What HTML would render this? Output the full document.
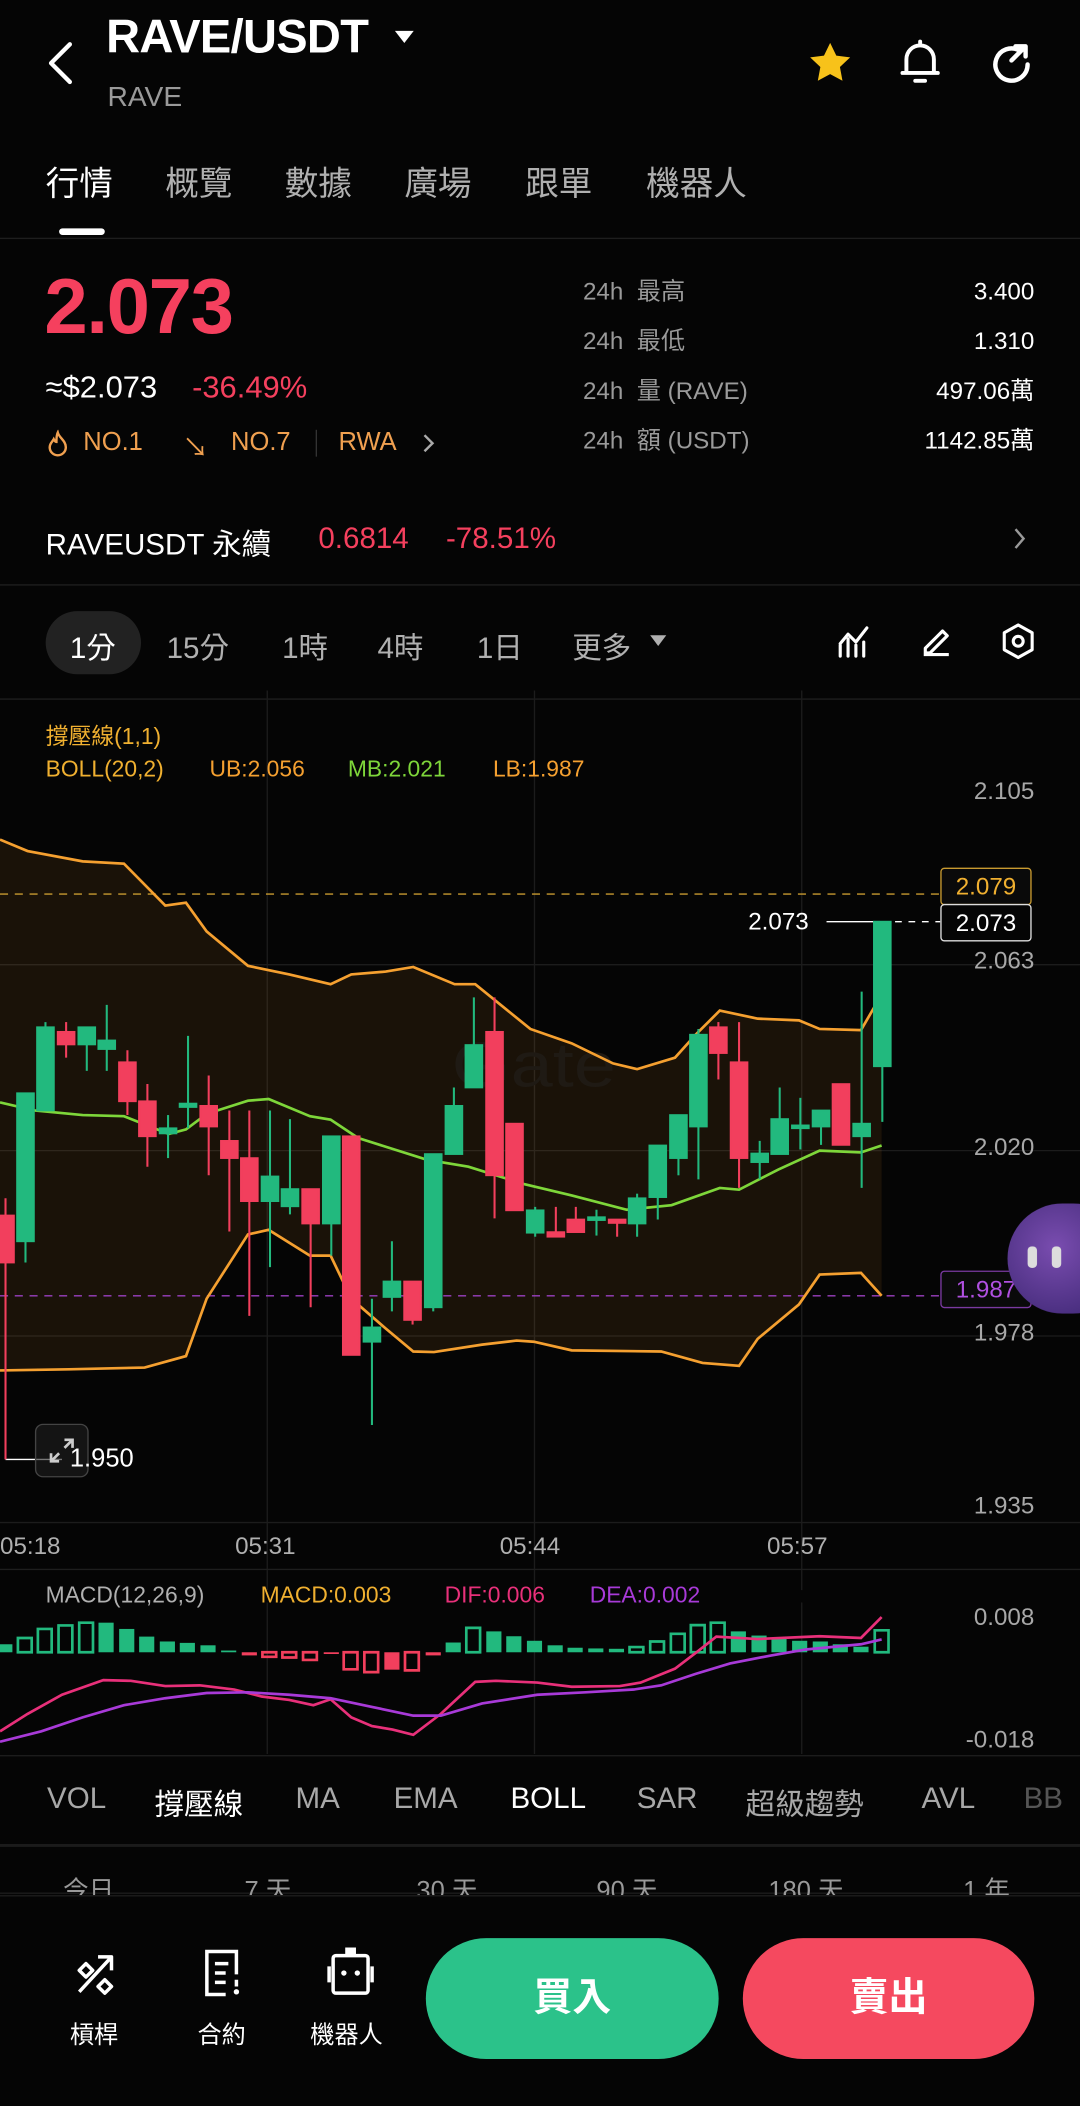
<!DOCTYPE html>
<html><head><meta charset="utf-8">
<style>
*{margin:0;padding:0;box-sizing:border-box}
html,body{width:1080px;height:2106px;background:#050505;overflow:hidden}
body{font-family:"Liberation Sans","Noto Sans CJK TC",sans-serif;color:#fff}
#w{position:absolute;left:0;top:0;width:804px;height:1568px;transform:scale(1.34328,1.34311);transform-origin:0 0;background:#050505}
.a{position:absolute;white-space:nowrap}
.g{color:#9a9a9a}
.r{color:#f5405e}
.line{position:absolute;left:0;width:804px;height:1px;background:#1e1e1e}
.ax{position:absolute;right:34px;font-size:18px;color:#a8a8a8;text-align:right}
</style></head><body><div id="w">

<svg class="a" style="left:33px;top:30px" width="24" height="34" viewBox="0 0 24 34"><path d="M19 3 L5 17 L19 31" fill="none" stroke="#fff" stroke-width="3.2" stroke-linecap="round" stroke-linejoin="round"/></svg>
<div class="a" style="left:79px;top:8px;font-size:35px;font-weight:bold;letter-spacing:-0.5px">RAVE/USDT</div>
<svg class="a" style="left:293px;top:22px" width="16" height="12"><path d="M1 1 H15 L8 10 Z" fill="#fff"/></svg>
<div class="a g" style="left:80px;top:61px;font-size:21px">RAVE</div>
<svg class="a" style="left:599px;top:28px" width="38" height="38" viewBox="0 0 24 24"><path d="M12 2.5l2.9 6 6.5.8-4.8 4.5 1.2 6.5L12 17.2 6.2 20.3l1.2-6.5L2.6 9.3l6.5-.8z" fill="#f7c21a"/></svg>
<svg class="a" style="left:667px;top:28px" width="36" height="38" viewBox="0 0 24 26"><path d="M5 18V11a7 7 0 0 1 14 0v7H5z M3 18h18 M9.5 22h5 M12 2v2" fill="none" stroke="#fff" stroke-width="2" stroke-linecap="round" stroke-linejoin="round"/></svg>
<svg class="a" style="left:735px;top:30px" width="36" height="36" viewBox="0 0 24 24"><path d="M20 12a8 8 0 1 1-4-6.9 M14 3h5v5 M19 3l-7 7" fill="none" stroke="#fff" stroke-width="2.2" stroke-linecap="round" stroke-linejoin="round"/></svg>

<div class="a" style="left:34px;top:117px;font-size:25px">行情</div>
<div class="a g" style="left:123px;top:117px;font-size:25px;color:#b0b0b0">概覽</div>
<div class="a g" style="left:212px;top:117px;font-size:25px;color:#b0b0b0">數據</div>
<div class="a g" style="left:301px;top:117px;font-size:25px;color:#b0b0b0">廣場</div>
<div class="a g" style="left:391px;top:117px;font-size:25px;color:#b0b0b0">跟單</div>
<div class="a g" style="left:481px;top:117px;font-size:25px;color:#b0b0b0">機器人</div>
<div class="a" style="left:44px;top:170px;width:34px;height:5px;border-radius:3px;background:#fff"></div>
<div class="line" style="top:177px"></div>

<div class="a r" style="left:33px;top:195px;font-size:58px;font-weight:bold;letter-spacing:-1px">2.073</div>
<div class="a" style="left:34px;top:275px;font-size:23px">≈$2.073</div>
<div class="a r" style="left:143px;top:275px;font-size:23px">-36.49%</div>
<svg class="a" style="left:34px;top:320px" width="18" height="20" viewBox="0 0 18 20"><path d="M9 2c1 4 6 6 6 11a6 6 0 0 1-12 0c0-3 2-4 3-6 1 2 2 2 2 2 0-3 0-5 1-7z" fill="none" stroke="#f0a050" stroke-width="1.8"/></svg>
<div class="a" style="left:62px;top:319px;font-size:19px;color:#f0a050">NO.1</div>
<div class="a" style="left:136px;top:319px;font-size:19px;color:#f0a050">↘</div>
<div class="a" style="left:172px;top:319px;font-size:19px;color:#f0a050">NO.7</div>
<div class="a" style="left:235px;top:320px;width:1px;height:20px;background:#333"></div>
<div class="a" style="left:252px;top:319px;font-size:19px;color:#f0a050">RWA</div>
<svg class="a" style="left:313px;top:322px" width="12" height="16"><path d="M3 2l6 6-6 6" fill="none" stroke="#aaa" stroke-width="1.8"/></svg>

<div class="a g" style="left:434px;top:206px;font-size:18px;line-height:22px">24h&nbsp;&nbsp;最高<br><span style="display:block;height:15px"></span>24h&nbsp;&nbsp;最低<br><span style="display:block;height:15px"></span>24h&nbsp;&nbsp;量 (RAVE)<br><span style="display:block;height:15px"></span>24h&nbsp;&nbsp;額 (USDT)</div>
<div class="a" style="right:34px;top:206px;font-size:18px;line-height:22px;text-align:right">3.400<br><span style="display:block;height:15px"></span>1.310<br><span style="display:block;height:15px"></span>497.06萬<br><span style="display:block;height:15px"></span>1142.85萬</div>

<div class="a" style="left:34px;top:388px;font-size:22px">RAVEUSDT 永續</div>
<div class="a r" style="left:237px;top:388px;font-size:22px">0.6814</div>
<div class="a r" style="left:332px;top:388px;font-size:22px">-78.51%</div>
<svg class="a" style="left:753px;top:392px" width="12" height="18"><path d="M3 2l6 7-6 7" fill="none" stroke="#999" stroke-width="1.8"/></svg>
<div class="line" style="top:435px"></div>

<div class="a" style="left:34px;top:455px;width:71px;height:47px;border-radius:24px;background:#222"></div>
<div class="a" style="left:52px;top:465px;font-size:22px">1分</div>
<div class="a" style="left:124px;top:465px;font-size:22px;color:#b0b0b0">15分</div>
<div class="a" style="left:210px;top:465px;font-size:22px;color:#b0b0b0">1時</div>
<div class="a" style="left:281px;top:465px;font-size:22px;color:#b0b0b0">4時</div>
<div class="a" style="left:355px;top:465px;font-size:22px;color:#b0b0b0">1日</div>
<div class="a" style="left:426px;top:465px;font-size:22px;color:#b0b0b0">更多</div>
<svg class="a" style="left:483px;top:472px" width="14" height="10"><path d="M1 1H13L7 9Z" fill="#b0b0b0"/></svg>
<svg class="a" style="left:622px;top:464px" width="28" height="28" viewBox="0 0 24 24"><path d="M3 21V14 M8 21V10 M13 21V14 M18 21V12 M3 13l5-6 5 5 7-9" fill="none" stroke="#fff" stroke-width="2" stroke-linecap="round" stroke-linejoin="round"/></svg>
<svg class="a" style="left:683px;top:464px" width="28" height="28" viewBox="0 0 24 24"><path d="M4 20h16 M5 16l11-11 3 3-11 11H5z" fill="none" stroke="#fff" stroke-width="2" stroke-linejoin="round"/></svg>
<svg class="a" style="left:744px;top:463px" width="28" height="30" viewBox="0 0 24 26"><path d="M12 2l9 5v11l-9 5-9-5V7z" fill="none" stroke="#fff" stroke-width="2" stroke-linejoin="round"/><circle cx="12" cy="12.5" r="3.2" fill="none" stroke="#fff" stroke-width="2"/></svg>
<div class="line" style="top:520px"></div>

<svg class="a" style="left:0;top:513.8px" width="804" height="670" viewBox="0 0 1568 1568" preserveAspectRatio="none">
<g stroke="#1c1c1c" stroke-width="1">
<line x1="388" y1="0" x2="388" y2="1568" vector-effect="non-scaling-stroke"/>
<line x1="776" y1="0" x2="776" y2="1568" vector-effect="non-scaling-stroke"/>
<line x1="1164" y1="0" x2="1164" y2="1568" vector-effect="non-scaling-stroke"/>
<line x1="0" y1="478" x2="1568" y2="478" vector-effect="non-scaling-stroke"/>
<line x1="0" y1="802" x2="1568" y2="802" vector-effect="non-scaling-stroke"/>
<line x1="0" y1="1125" x2="1568" y2="1125" vector-effect="non-scaling-stroke"/>
<line x1="0" y1="1450" x2="1568" y2="1450" vector-effect="non-scaling-stroke"/>
</g>
<path d="M0,260 L40,280 120,298 180,302 240,375 270,370 300,420 360,480 420,495 480,512 510,495 560,490 600,482 660,512 690,512 770,590 830,615 890,650 925,660 980,640 1010,600 1045,558 1100,572 1160,575 1190,590 1250,592 1280,530 L1280,1055 1250,1015 1190,1018 1160,1070 1100,1130 1073,1177 1020,1172 960,1152 830,1150 775,1135 750,1133 700,1140 630,1153 600,1152 560,1112 510,1060 480,985 450,985 390,940 360,948 300,1060 270,1160 210,1180 100,1183 0,1185Z" fill="#f5a030" fill-opacity="0.09"/>
<text x="775" y="690" font-family="Liberation Sans" font-size="110" fill="#1f1a14" text-anchor="middle">Gate</text>
<line x1="0" y1="355" x2="1365" y2="355" stroke="#c89a30" stroke-dasharray="6 5" vector-effect="non-scaling-stroke"/>
<line x1="0" y1="1055" x2="1365" y2="1055" stroke="#9a40c0" stroke-dasharray="6 5" vector-effect="non-scaling-stroke"/>
<line x1="1200" y1="403" x2="1280" y2="403" stroke="#fff" vector-effect="non-scaling-stroke"/>
<line x1="1280" y1="403" x2="1365" y2="403" stroke="#fff" stroke-dasharray="5 5" vector-effect="non-scaling-stroke"/>
<line x1="8" y1="1340" x2="90" y2="1340" stroke="#fff" vector-effect="non-scaling-stroke"/>
<g fill="none" stroke-width="2">
<path d="M0,260 L40,280 120,298 180,302 240,375 270,370 300,420 360,480 420,495 480,512 510,495 560,490 600,482 660,512 690,512 770,590 830,615 890,650 925,660 980,640 1010,600 1045,558 1100,572 1160,575 1190,590 1250,592 1280,530" stroke="#f5a030" vector-effect="non-scaling-stroke"/>
<path d="M0,718 L50,732 120,740 180,742 245,773 270,765 300,738 360,715 390,712 450,742 480,748 520,780 620,818 680,830 760,860 830,880 910,905 975,897 1045,867 1073,870 1130,835 1190,802 1250,805 1280,793" stroke="#7ed63a" vector-effect="non-scaling-stroke"/>
<path d="M0,1185 L100,1183 210,1180 270,1160 300,1060 360,948 390,940 450,985 480,985 510,1060 560,1112 600,1152 630,1153 700,1140 750,1133 775,1135 830,1150 960,1152 1020,1172 1073,1177 1100,1130 1160,1070 1190,1018 1250,1015 1280,1055" stroke="#f5a030" vector-effect="non-scaling-stroke"/>
</g>
<g fill="#f23f5d" stroke="#f23f5d" stroke-width="3">
<line x1="8" y1="885" x2="8" y2="1340"/><rect x="-4" y="915" width="24" height="82"/>
<line x1="96" y1="578" x2="96" y2="640"/><rect x="84" y="595" width="24" height="22"/>
<line x1="185" y1="627" x2="185" y2="740"/><rect x="173" y="648" width="24" height="68"/>
<line x1="214" y1="686" x2="214" y2="830"/><rect x="202" y="716" width="24" height="61"/>
<line x1="303" y1="671" x2="303" y2="845"/><rect x="291" y="724" width="24" height="36"/>
<line x1="333" y1="732" x2="333" y2="943"/><rect x="321" y="785" width="24" height="30"/>
<line x1="362" y1="732" x2="362" y2="1090"/><rect x="350" y="815" width="24" height="75"/>
<line x1="451" y1="869" x2="451" y2="1075"/><rect x="439" y="869" width="24" height="60"/>
<rect x="498" y="777" width="24" height="381"/>
<line x1="599" y1="1030" x2="599" y2="1105"/><rect x="587" y="1030" width="24" height="67"/>
<line x1="718" y1="535" x2="718" y2="920"/><rect x="706" y="595" width="24" height="250"/>
<rect x="735" y="755" width="24" height="151"/>
<line x1="807" y1="900" x2="807" y2="952"/><rect x="795" y="944" width="24" height="8"/>
<line x1="836" y1="900" x2="836" y2="944"/><rect x="824" y="922" width="24" height="22"/>
<line x1="896" y1="922" x2="896" y2="952"/><rect x="884" y="922" width="24" height="6"/>
<line x1="1043" y1="578" x2="1043" y2="678"/><rect x="1031" y="587" width="24" height="45"/>
<line x1="1073" y1="578" x2="1073" y2="867"/><rect x="1061" y="648" width="24" height="167"/>
<rect x="1209" y="686" width="24" height="106"/>
</g>
<g fill="#22b97e" stroke="#22b97e" stroke-width="3">
<line x1="37" y1="702" x2="37" y2="997"/><rect x="25" y="702" width="24" height="258"/>
<line x1="66" y1="578" x2="66" y2="732"/><rect x="54" y="587" width="24" height="145"/>
<line x1="126" y1="587" x2="126" y2="663"/><rect x="114" y="587" width="24" height="30"/>
<line x1="155" y1="548" x2="155" y2="663"/><rect x="143" y="610" width="24" height="15"/>
<line x1="244" y1="740" x2="244" y2="815"/><rect x="232" y="763" width="24" height="9"/>
<line x1="273" y1="602" x2="273" y2="763"/><rect x="261" y="720" width="24" height="6"/>
<line x1="392" y1="732" x2="392" y2="1005"/><rect x="380" y="847" width="24" height="43"/>
<line x1="421" y1="747" x2="421" y2="913"/><rect x="409" y="869" width="24" height="30"/>
<line x1="481" y1="777" x2="481" y2="985"/><rect x="469" y="777" width="24" height="152"/>
<line x1="540" y1="1060" x2="540" y2="1280"/><rect x="528" y="1110" width="24" height="25"/>
<line x1="569" y1="960" x2="569" y2="1082"/><rect x="557" y="1030" width="24" height="27"/>
<line x1="629" y1="808" x2="629" y2="1082"/><rect x="617" y="808" width="24" height="267"/>
<line x1="659" y1="692" x2="659" y2="808"/><rect x="647" y="724" width="24" height="84"/>
<line x1="688" y1="535" x2="688" y2="692"/><rect x="676" y="618" width="24" height="74"/>
<line x1="777" y1="900" x2="777" y2="952"/><rect x="765" y="906" width="24" height="39"/>
<line x1="866" y1="905" x2="866" y2="950"/><rect x="854" y="918" width="24" height="5"/>
<line x1="925" y1="877" x2="925" y2="952"/><rect x="913" y="885" width="24" height="44"/>
<line x1="955" y1="793" x2="955" y2="922"/><rect x="943" y="793" width="24" height="90"/>
<line x1="985" y1="740" x2="985" y2="845"/><rect x="973" y="740" width="24" height="75"/>
<line x1="1014" y1="590" x2="1014" y2="852"/><rect x="1002" y="600" width="24" height="160"/>
<line x1="1103" y1="785" x2="1103" y2="852"/><rect x="1091" y="807" width="24" height="15"/>
<line x1="1132" y1="692" x2="1132" y2="808"/><rect x="1120" y="747" width="24" height="61"/>
<line x1="1162" y1="710" x2="1162" y2="800"/><rect x="1150" y="758" width="24" height="5"/>
<line x1="1192" y1="732" x2="1192" y2="792"/><rect x="1180" y="732" width="24" height="28"/>
<line x1="1251" y1="525" x2="1251" y2="867"/><rect x="1239" y="755" width="24" height="22"/>
<line x1="1281" y1="403" x2="1281" y2="752"/><rect x="1269" y="403" width="24" height="252"/>
</g>
</svg>

<div class="a" style="left:34px;top:534px;font-size:17px;color:#f0b030">撐壓線(1,1)</div>
<div class="a" style="left:34px;top:563px;font-size:17px;color:#f0b030">BOLL(20,2)</div>
<div class="a" style="left:156px;top:563px;font-size:17px;color:#f5a030">UB:2.056</div>
<div class="a" style="left:259px;top:563px;font-size:17px;color:#7ed63a">MB:2.021</div>
<div class="a" style="left:367px;top:563px;font-size:17px;color:#f5a030">LB:1.987</div>
<div class="ax" style="top:579px">2.105</div>
<div class="ax" style="top:705px">2.063</div>
<div class="ax" style="top:844px">2.020</div>
<div class="ax" style="top:982px">1.978</div>
<div class="ax" style="top:1111px">1.935</div>
<div class="a" style="left:700px;top:646px;width:68px;height:28px;border:1px solid #c89a30;border-radius:3px;background:#0a0a0a;color:#f0b030;font-size:18px;text-align:center;line-height:26px">2.079</div>
<div class="a" style="left:700px;top:673px;width:68px;height:28px;border:1px solid #ddd;border-radius:3px;background:#050505;color:#fff;font-size:18px;text-align:center;line-height:26px">2.073</div>
<div class="a" style="left:557px;top:676px;font-size:18px">2.073</div>
<div class="a" style="left:700px;top:946px;width:68px;height:28px;border:1px solid #7a3aa0;border-radius:3px;background:#0a0a0a;color:#b050e0;font-size:18px;text-align:center;line-height:26px">1.987</div>
<div class="a" style="left:26px;top:1060px;width:40px;height:40px;border:1.5px solid #444;border-radius:6px;background:rgba(30,30,30,.6)"></div>
<svg class="a" style="left:35px;top:1069px" width="22" height="22" viewBox="0 0 22 22"><path d="M13 3h6v6 M19 3l-6 6 M9 19H3v-6 M3 19l6-6" fill="none" stroke="#ccc" stroke-width="2"/></svg>
<div class="a" style="left:52px;top:1076px;font-size:19px">1.950</div>
<div class="a" style="left:750px;top:896px;width:90px;height:82px;border-radius:45px;background:radial-gradient(circle at 40% 40%,#7a4db0,#4a2f80 70%)"></div>
<div class="a" style="left:765px;top:928px;width:7px;height:16px;border-radius:3px;background:#ddd"></div>
<div class="a" style="left:783px;top:928px;width:7px;height:16px;border-radius:3px;background:#ddd"></div>

<div class="a" style="left:0;top:1141px;font-size:18px;color:#b0b0b0">05:18</div>
<div class="a" style="left:175px;top:1141px;font-size:18px;color:#b0b0b0">05:31</div>
<div class="a" style="left:372px;top:1141px;font-size:18px;color:#b0b0b0">05:44</div>
<div class="a" style="left:571px;top:1141px;font-size:18px;color:#b0b0b0">05:57</div>
<div class="line" style="top:1168px"></div>

<svg class="a" style="left:0;top:1161.5px" width="804" height="406.5" viewBox="0 0 1568 1568" preserveAspectRatio="none">
<g stroke="#1c1c1c"><line x1="388" y1="120" x2="388" y2="555" vector-effect="non-scaling-stroke"/><line x1="776" y1="120" x2="776" y2="555" vector-effect="non-scaling-stroke"/><line x1="1164" y1="120" x2="1164" y2="555" vector-effect="non-scaling-stroke"/><line x1="0" y1="560" x2="1568" y2="560" vector-effect="non-scaling-stroke"/><line x1="0" y1="820" x2="1568" y2="820" vector-effect="non-scaling-stroke"/><line x1="0" y1="955" x2="1568" y2="955" vector-effect="non-scaling-stroke"/></g>
<g fill="#22b97e"><rect x="-4" y="240" width="22" height="23"/><rect x="143" y="178" width="22" height="85"/><rect x="173" y="196" width="22" height="67"/><rect x="202" y="218" width="22" height="45"/><rect x="232" y="232" width="22" height="31"/><rect x="261" y="236" width="22" height="27"/><rect x="291" y="243" width="22" height="20"/><rect x="321" y="258" width="22" height="5"/><rect x="647" y="235" width="22" height="28"/><rect x="706" y="203" width="22" height="60"/><rect x="735" y="217" width="22" height="46"/><rect x="765" y="230" width="22" height="33"/><rect x="795" y="243" width="22" height="20"/><rect x="824" y="250" width="22" height="13"/><rect x="854" y="252" width="22" height="11"/><rect x="884" y="253" width="22" height="10"/><rect x="1061" y="203" width="22" height="60"/><rect x="1091" y="215" width="22" height="48"/><rect x="1120" y="222" width="22" height="41"/><rect x="1150" y="230" width="22" height="33"/><rect x="1180" y="232" width="22" height="31"/><rect x="1209" y="240" width="22" height="23"/><rect x="1239" y="247" width="22" height="16"/></g>
<g fill="none" stroke="#22b97e" stroke-width="2"><rect x="26" y="222" width="20" height="41" vector-effect="non-scaling-stroke"/><rect x="55" y="196" width="20" height="67" vector-effect="non-scaling-stroke"/><rect x="85" y="186" width="20" height="77" vector-effect="non-scaling-stroke"/><rect x="115" y="178" width="20" height="85" vector-effect="non-scaling-stroke"/><rect x="677" y="193" width="20" height="70" vector-effect="non-scaling-stroke"/><rect x="914" y="248" width="20" height="15" vector-effect="non-scaling-stroke"/><rect x="944" y="232" width="20" height="31" vector-effect="non-scaling-stroke"/><rect x="974" y="210" width="20" height="53" vector-effect="non-scaling-stroke"/><rect x="1003" y="185" width="20" height="78" vector-effect="non-scaling-stroke"/><rect x="1032" y="178" width="20" height="85" vector-effect="non-scaling-stroke"/><rect x="1270" y="200" width="20" height="63" vector-effect="non-scaling-stroke"/></g>
<g fill="#f23f5d"><rect x="351" y="263" width="22" height="9"/><rect x="470" y="263" width="22" height="5"/><rect x="558" y="263" width="22" height="50"/><rect x="618" y="263" width="22" height="9"/></g>
<g fill="none" stroke="#f23f5d" stroke-width="2"><rect x="381" y="263" width="20" height="13" vector-effect="non-scaling-stroke"/><rect x="410" y="263" width="20" height="15" vector-effect="non-scaling-stroke"/><rect x="440" y="263" width="20" height="22" vector-effect="non-scaling-stroke"/><rect x="499" y="263" width="20" height="49" vector-effect="non-scaling-stroke"/><rect x="529" y="263" width="20" height="57" vector-effect="non-scaling-stroke"/><rect x="588" y="263" width="20" height="52" vector-effect="non-scaling-stroke"/></g>
<path d="M0,490 L40,440 90,385 150,343 190,345 240,360 290,358 340,370 380,390 420,400 455,415 480,398 510,450 540,475 570,485 600,500 640,440 690,348 720,345 780,350 830,362 900,360 930,350 980,310 1010,265 1040,218 1100,225 1190,217 1250,222 1280,162" fill="none" stroke="#e8307a" stroke-width="2" vector-effect="non-scaling-stroke"/>
<path d="M0,520 L60,490 120,450 180,415 240,395 300,380 360,378 420,385 480,395 540,420 600,445 640,445 700,410 780,385 850,378 920,370 960,358 1010,325 1060,295 1120,272 1170,255 1250,240 1280,226" fill="none" stroke="#a83ad8" stroke-width="2" vector-effect="non-scaling-stroke"/>
</svg>
<div class="a" style="left:34px;top:1178px;font-size:17px;color:#b0b0b0">MACD(12,26,9)</div>
<div class="a" style="left:194px;top:1178px;font-size:17px;color:#f0b030">MACD:0.003</div>
<div class="a" style="left:331px;top:1178px;font-size:17px;color:#e8307a">DIF:0.006</div>
<div class="a" style="left:439px;top:1178px;font-size:17px;color:#a83ad8">DEA:0.002</div>
<div class="ax" style="top:1194px">0.008</div>
<div class="ax" style="top:1285px">-0.018</div>

<div class="a" style="left:35px;top:1326px;font-size:22px;color:#a8a8a8">VOL</div>
<div class="a" style="left:115px;top:1326px;font-size:22px">撐壓線</div>
<div class="a" style="left:220px;top:1326px;font-size:22px;color:#a8a8a8">MA</div>
<div class="a" style="left:293px;top:1326px;font-size:22px;color:#a8a8a8">EMA</div>
<div class="a" style="left:380px;top:1326px;font-size:22px">BOLL</div>
<div class="a" style="left:474px;top:1326px;font-size:22px;color:#a8a8a8">SAR</div>
<div class="a" style="left:555px;top:1326px;font-size:22px;color:#a8a8a8">超級趨勢</div>
<div class="a" style="left:686px;top:1326px;font-size:22px;color:#a8a8a8">AVL</div>
<div class="a" style="left:762px;top:1326px;font-size:22px;color:#555">BB</div>
<div class="line" style="top:1373px"></div>
<div class="a" style="left:0;top:1390px;width:804px;height:21px;overflow:hidden;font-size:19px;color:#999">
<span class="a" style="left:47px;top:3px">今日</span><span class="a" style="left:182px;top:3px">7 天</span><span class="a" style="left:310px;top:3px">30 天</span><span class="a" style="left:444px;top:3px">90 天</span><span class="a" style="left:572px;top:3px">180 天</span><span class="a" style="left:717px;top:3px">1 年</span></div>

<div class="a" style="left:0;top:1411px;width:804px;height:157px;background:#050505;border-top:1px solid #1e1e1e"></div>
<svg class="a" style="left:55px;top:1453px" width="32" height="34" viewBox="0 0 32 34"><path d="M4 30L28 4 M18 4h10v10 M4 14l5-5 5 5-5 5z M18 26l5-5 5 5-5 5z" fill="none" stroke="#fff" stroke-width="2.6" stroke-linejoin="round"/></svg>
<div class="a" style="left:52px;top:1501px;font-size:18px">槓桿</div>
<svg class="a" style="left:150px;top:1450px" width="34" height="38" viewBox="0 0 34 38"><path d="M26 20V3H4v32h14 M10 12h10 M10 19h8 M10 26h8" fill="none" stroke="#fff" stroke-width="2.6"/><circle cx="26" cy="33" r="2" fill="#fff"/><path d="M26 24v5" stroke="#fff" stroke-width="2.6"/></svg>
<div class="a" style="left:147px;top:1501px;font-size:18px">合約</div>
<svg class="a" style="left:243px;top:1448px" width="36" height="40" viewBox="0 0 36 40"><rect x="14" y="2" width="8" height="5" fill="#fff"/><rect x="5" y="8" width="26" height="28" rx="2" fill="none" stroke="#fff" stroke-width="2.6"/><path d="M2 16v12 M34 16v12" stroke="#fff" stroke-width="2.6"/><circle cx="13" cy="21" r="2" fill="#fff"/><circle cx="23" cy="21" r="2" fill="#fff"/></svg>
<div class="a" style="left:231px;top:1501px;font-size:18px">機器人</div>
<div class="a" style="left:317px;top:1443px;width:218px;height:90px;border-radius:45px;background:#2bc28a;font-size:29px;font-weight:bold;text-align:center;line-height:90px">買入</div>
<div class="a" style="left:553px;top:1443px;width:217px;height:90px;border-radius:45px;background:#f5495f;font-size:29px;font-weight:bold;text-align:center;line-height:90px">賣出</div>

</div></body></html>
